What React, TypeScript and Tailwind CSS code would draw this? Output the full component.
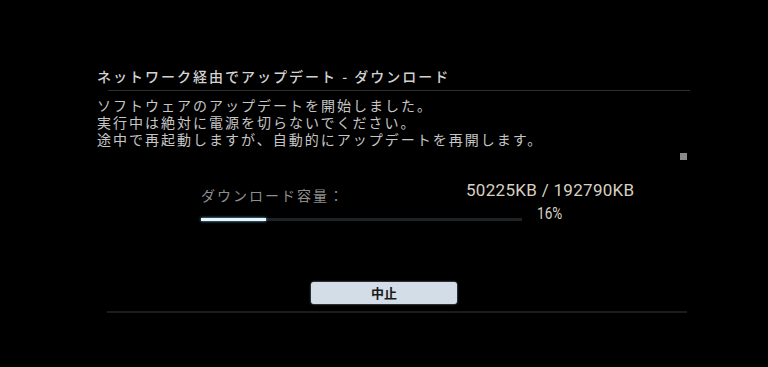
export default function App() {
  const jp = { fontFamily: '"Noto Sans CJK JP", "Noto Sans", sans-serif' };
  const num = { fontFamily: 'Roboto, "Liberation Sans", sans-serif' };
  return (
    <div className="w-[768px] h-[367px] bg-black overflow-hidden" style={jp}>
      <div className="pt-[66px] pl-[97px]">
        <div className="text-[14px] leading-[20px] tracking-[2px] text-[#d2d2d2] font-medium">
          ネットワーク経由でアップデート - ダウンロード
        </div>
      </div>
      <div className="mt-[4px] ml-[108px] w-[582px] h-px bg-[#2e2e2e]" />
      <div className="pl-[97px] pt-[6px] text-[14px] leading-[17px] tracking-[2px] text-[#c6c6c6]">
        <p className="h-[17px]">ソフトウェアのアップデートを開始しました。</p>
        <p className="h-[17px]">実行中は絶対に電源を切らないでください。</p>
        <p className="h-[17px]">途中で再起動しますが、自動的にアップデートを再開します。</p>
      </div>
      <div className="flex justify-end pr-[81px] pt-[5px]">
        <div className="w-[7px] h-[7px] bg-[#8a8a8a]" />
      </div>
      <div className="pl-[201px] pt-[26px] flex">
        <div className="w-[321px]">
          <div className="text-[14px] leading-[18px] tracking-[2px] text-[#8e8e8e]">
            ダウンロード容量：
          </div>
          <div className="mt-[14px] h-[3px] bg-[#1e2326]">
            <div className="h-[3px] w-[65px] bg-[#e8f6ff] shadow-[0_0_3px_#7fc8e8]" />
          </div>
        </div>
        <div className="-mt-[5px] ml-[-56px] w-[166px] flex flex-col" style={num}>
          <div className="text-[17px] leading-[18px] tracking-[0.3px] text-[#d8d0c2] text-right whitespace-nowrap">
            50225KB / 192790KB
          </div>
          <div className="pl-[71px] mt-[5px] text-[17px] leading-[18px] text-[#d8d0c2]">
            <span className="inline-block scale-x-[0.8] origin-left">16%</span>
          </div>
        </div>
      </div>
      <div className="pt-[60px] pl-[311px]">
        <button className="w-[146px] h-[22px] rounded-[3px] bg-[#d2dde7] text-[13px] font-bold text-[#1a1a1a] flex items-center justify-center shadow-[0_0_2px_#9fb4c4]">
          中止
        </button>
      </div>
      <div className="mt-[7px] ml-[107px] w-[580px] h-[2px] bg-[#1c1c1c]" />
    </div>
  );
}
